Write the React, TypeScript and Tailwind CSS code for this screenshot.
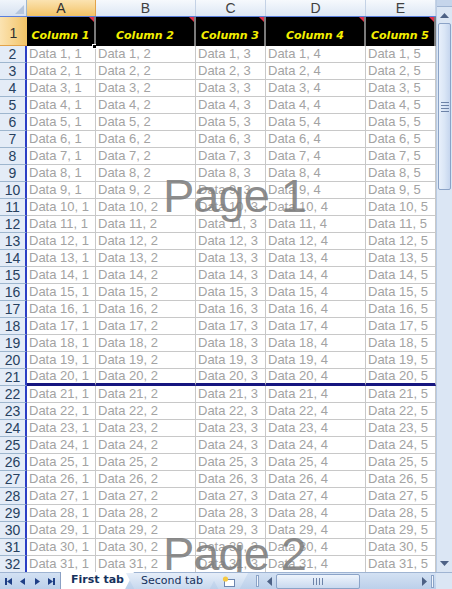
const cols = [
  { l: 'A', w: 'w-[69px]' },
  { l: 'B', w: 'w-[100px]' },
  { l: 'C', w: 'w-[70px]' },
  { l: 'D', w: 'w-[100px]' },
  { l: 'E', w: 'w-[70px]' },
];

const rows = Array.from({ length: 31 }, (_, i) => i + 2);

function Triangle() {
  return (
    <svg className="absolute right-0 top-0" width="5" height="5" viewBox="0 0 5 5">
      <polygon points="0,0 5,0 5,5" fill="#e0304a" />
    </svg>
  );
}

function VScroll() {
  return (
    <div className="w-[16px] flex flex-col bg-[#dbe6f4] border-l border-[#b9cbe3]">
      <div className="h-[7px] bg-[#c5d5eb] border-b border-[#9fb4d2]" />
      <div className="h-[16px] flex items-center justify-center">
        <svg width="9" height="5" viewBox="0 0 9 5">
          <polygon points="0,5 9,5 4.5,0" fill="#4d6185" />
        </svg>
      </div>
      <div className="mx-[1px] h-[167px] rounded-[2px] border border-[#8ba3c7] bg-gradient-to-r from-[#e8f0fb] via-[#dae6f6] to-[#c6d6ee] flex items-center justify-center">
        <div className="flex flex-col gap-[2px]">
          <div className="w-[8px] h-px bg-[#6d83a8]" />
          <div className="w-[8px] h-px bg-[#6d83a8]" />
          <div className="w-[8px] h-px bg-[#6d83a8]" />
          <div className="w-[8px] h-px bg-[#6d83a8]" />
        </div>
      </div>
      <div className="flex-1" />
      <div className="h-[17px] flex items-center justify-center">
        <svg width="9" height="5" viewBox="0 0 9 5">
          <polygon points="0,0 9,0 4.5,5" fill="#4d6185" />
        </svg>
      </div>
    </div>
  );
}

function NavArrow({ dir, bar }: { dir: 'l' | 'r'; bar?: boolean }) {
  return (
    <svg width="10" height="9" viewBox="0 0 10 9">
      {dir === 'l' ? (
        <>
          {bar && <rect x="1" y="1" width="2" height="7" fill="#1f3f86" />}
          <polygon points={bar ? '3,4.5 8,1 8,8' : '2,4.5 7,1 7,8'} fill="#1f3f86" />
        </>
      ) : (
        <>
          <polygon points={bar ? '2,1 7,4.5 2,8' : '3,1 8,4.5 3,8'} fill="#1f3f86" />
          {bar && <rect x="7" y="1" width="2" height="7" fill="#1f3f86" />}
        </>
      )}
    </svg>
  );
}

function TabBar() {
  return (
    <div className="h-[17px] flex items-stretch bg-gradient-to-b from-[#d3e1f3] to-[#bcd0ea] border-t border-[#9fb4d2] font-['DejaVu_Sans',sans-serif] text-[11px] text-[#15315c]">
      <div className="w-[60px] flex items-center justify-around px-[2px]">
        <NavArrow dir="l" bar />
        <NavArrow dir="l" />
        <NavArrow dir="r" />
        <NavArrow dir="r" bar />
      </div>
      <div className="relative w-[74px] -mt-px bg-white font-bold flex items-center justify-center [clip-path:polygon(0_0,100%_0,88%_100%,0_100%)] border-l border-[#8aa0c4]">
        First tab
      </div>
      <div className="relative -ml-[8px] w-[92px] flex items-center justify-center bg-gradient-to-b from-[#e6eef9] to-[#c7d8ee] [clip-path:polygon(9%_100%,0_0,100%_0,91%_100%)]">
        Second tab
      </div>
      <div className="-ml-[8px] w-[38px] flex items-center justify-center bg-gradient-to-b from-[#e6eef9] to-[#c7d8ee] [clip-path:polygon(22%_100%,0_0,100%_0,78%_100%)]">
        <svg width="14" height="11" viewBox="0 0 14 11">
          <rect x="2.5" y="3.5" width="10" height="7" fill="#fff" stroke="#6c86b0" />
          <circle cx="3.5" cy="3" r="2.6" fill="#f5c842" />
        </svg>
      </div>
      <div className="w-[8px]" />
      <div className="w-[3px] my-[2px] bg-[#f2f6fc] border border-[#8ba3c7]" />
      <div className="flex-1 flex items-center ml-[3px]">
        <div className="w-[14px] flex justify-center">
          <svg width="5" height="9" viewBox="0 0 5 9">
            <polygon points="5,0 5,9 0,4.5" fill="#4d6185" />
          </svg>
        </div>
        <div className="w-[84px] h-[15px] rounded-[2px] border border-[#8ba3c7] bg-gradient-to-b from-[#eef4fc] to-[#c9d9ef] flex items-center justify-center gap-[2px]">
          <div className="w-px h-[7px] bg-[#6d83a8]" />
          <div className="w-px h-[7px] bg-[#6d83a8]" />
          <div className="w-px h-[7px] bg-[#6d83a8]" />
          <div className="w-px h-[7px] bg-[#6d83a8]" />
        </div>
        <div className="flex-1" />
        <div className="w-[14px] flex justify-center">
          <svg width="5" height="9" viewBox="0 0 5 9">
            <polygon points="0,0 0,9 5,4.5" fill="#4d6185" />
          </svg>
        </div>
        <div className="w-[3px] h-[13px] bg-[#f2f6fc] border border-[#8ba3c7] mr-[2px]" />
      </div>
      <div className="w-[16px] bg-[#dbe6f4]" />
    </div>
  );
}

export default function App() {
  return (
    <div className="w-[452px] h-[589px] flex flex-col overflow-hidden bg-white font-['Liberation_Sans',Arial,sans-serif]">
      <div className="flex flex-1 min-h-0">
        <div className="relative flex-1 overflow-hidden">
          {/* column headers */}
          <div className="flex h-[17px] border-b border-[#5a7edc]">
            <div className="w-[27px] relative border-r border-[#9eb6ce] bg-gradient-to-b from-[#f0f5fb] to-[#d6e1f0]">
              <svg className="absolute right-[2px] bottom-[2px]" width="9" height="9" viewBox="0 0 9 9">
                <polygon points="9,0 9,9 0,9" fill="#b5c6de" />
              </svg>
            </div>
            {cols.map((c, i) => (
              <div
                key={c.l}
                className={`${c.w} flex items-center justify-center text-[14px] border-r ${
                  i === 0
                    ? 'bg-gradient-to-b from-[#fbe3b1] to-[#f2c364] border-[#e2a34a] text-[#303030]'
                    : 'bg-gradient-to-b from-[#f6f9fd] to-[#dde7f4] border-[#c4d2e5] text-[#404040]'
                }`}
              >
                {c.l}
              </div>
            ))}
          </div>
          {/* row 1 */}
          <div className="flex h-[29px]">
            <div className="w-[27px] flex items-end justify-center pb-[1px] text-[14px] text-[#303030] bg-gradient-to-r from-[#fbe3b1] to-[#f2c364] border-b border-[#e2a34a]">
              1
            </div>
            {cols.map((c, i) => (
              <div
                key={c.l}
                className={`${c.w} relative bg-black flex items-end justify-center pb-[2px] border-r-2 border-[#7a7a7a] text-[#f4f000] font-bold italic text-[11px] font-['DejaVu_Sans',Verdana,sans-serif]`}
              >
                <Triangle />
                Column {i + 1}
                {i === 0 && <div className="absolute -right-[3px] -bottom-[3px] w-[5px] h-[5px] bg-black border border-white" />}
              </div>
            ))}
          </div>
          {rows.map((r) => (
            <div key={r} className="flex h-[17px]">
              <div className="w-[27px] flex items-center justify-center text-[14px] text-[#27415f] bg-[#e4ecf7] border-b border-[#9eb6ce] border-r-2 border-r-[#2c3fc4]">
                {r}
              </div>
              {cols.map((c, i) => (
                <div
                  key={c.l}
                  className={`${c.w} pl-[2px] flex items-center text-[13px] text-[#a3a3a3] whitespace-nowrap overflow-hidden border-r border-[#c8c8c8] ${
                    r === 21 ? 'border-b-[3px] border-b-[#16167f]' : 'border-b border-b-[#c8c8c8]'
                  }`}
                >
                  Data {r - 1}, {i + 1}
                </div>
              ))}
            </div>
          ))}
          <div className="absolute left-[163px] top-[172px] text-[47px] leading-none tracking-[-1px] text-[#7d7d7d]/90 pointer-events-none">
            Page 1
          </div>
          <div className="absolute left-[163px] top-[530px] text-[47px] leading-none tracking-[-1px] text-[#7d7d7d]/90 pointer-events-none">
            Page 2
          </div>
        </div>
        <VScroll />
      </div>
      <TabBar />
    </div>
  );
}
